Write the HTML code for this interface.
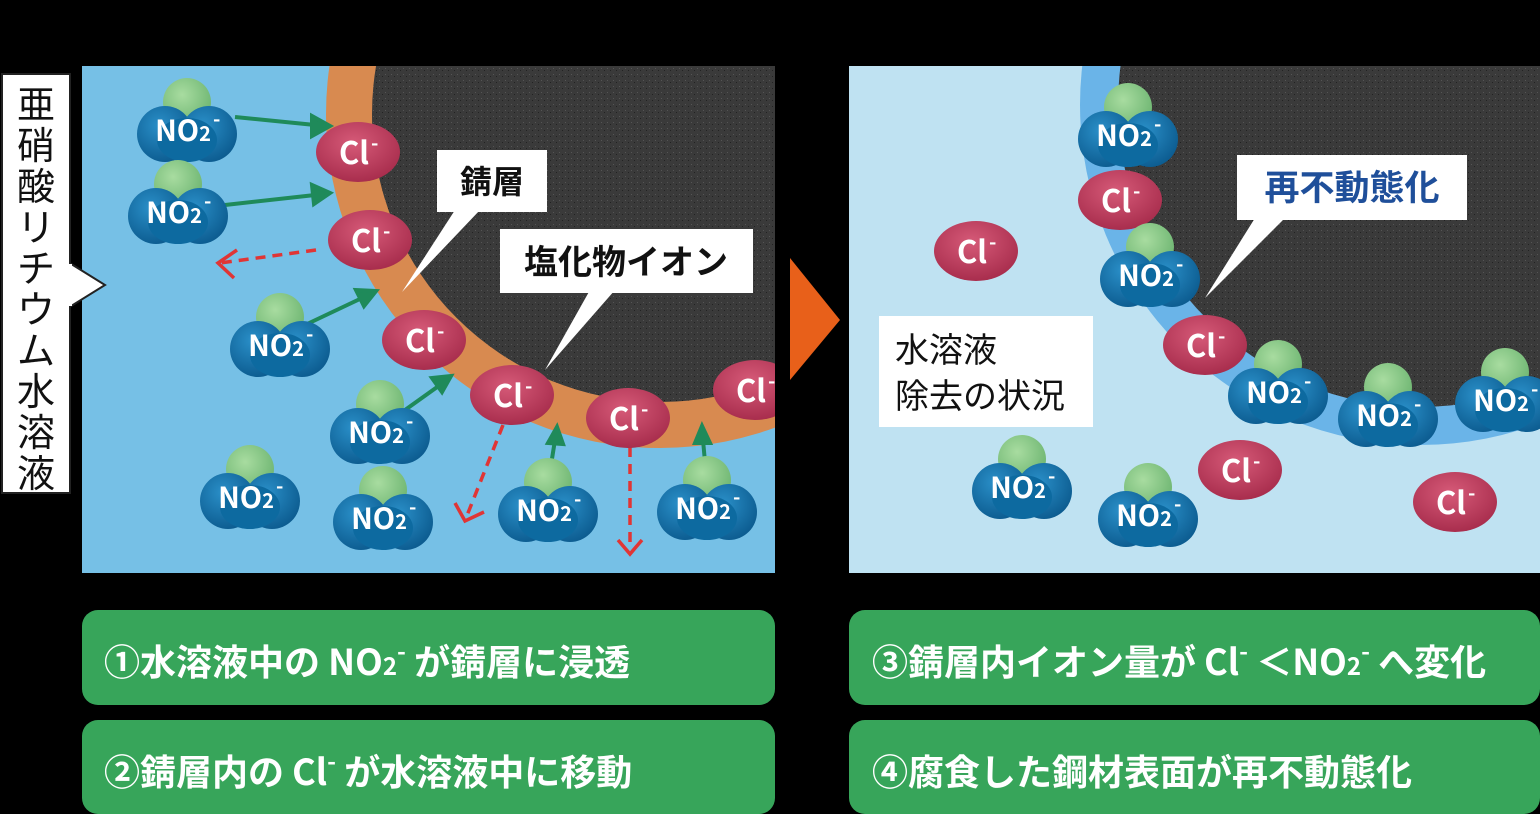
<!DOCTYPE html><html><head><meta charset="utf-8"><style>
html,body{margin:0;padding:0;background:#000;width:1540px;height:814px;overflow:hidden}
svg{display:block}
text{font-family:"Noto Sans CJK JP","Liberation Sans",sans-serif}
</style></head><body>
<svg width="1540" height="814" viewBox="0 0 1540 814" xmlns="http://www.w3.org/2000/svg">
<defs>
<pattern id="nz" width="6" height="6" patternUnits="userSpaceOnUse"><rect width="6" height="6" fill="#3a3a3a"/><rect x="1" y="2" width="1" height="1" fill="#555"/><rect x="4" y="4" width="1" height="1" fill="#222"/></pattern>
<radialGradient id="gb" cx="0.4" cy="0.35" r="0.7"><stop offset="0" stop-color="#2a8fc8"/><stop offset="1" stop-color="#0b5a8e"/></radialGradient>
<radialGradient id="gg" cx="0.4" cy="0.35" r="0.7"><stop offset="0" stop-color="#a8dca0"/><stop offset="1" stop-color="#6cb470"/></radialGradient>
<radialGradient id="gr" cx="0.45" cy="0.35" r="0.7"><stop offset="0" stop-color="#d65a78"/><stop offset="1" stop-color="#a52a4a"/></radialGradient>
<g id="no2"><circle cx="0" cy="-28" r="24" fill="url(#gg)"/><circle cx="-22" cy="4" r="28" fill="url(#gb)"/><circle cx="22" cy="4" r="28" fill="url(#gb)"/><ellipse cx="0" cy="10" rx="30" ry="22" fill="#0d6aa0"/><text x="-4" y="11" text-anchor="middle" font-size="29" font-weight="bold" fill="#fff">NO<tspan font-size="20">2</tspan></text><text x="26" y="-4" font-size="20" font-weight="bold" fill="#fff">-</text></g>
<g id="cl"><ellipse cx="0" cy="0" rx="42" ry="30" fill="url(#gr)"/><text x="-4" y="12" text-anchor="middle" font-size="31" font-weight="bold" fill="#fff">Cl</text><text x="13" y="-2" font-size="20" font-weight="bold" fill="#fff">-</text></g>
<clipPath id="cL"><rect x="82" y="66" width="693" height="507"/></clipPath>
<clipPath id="cR"><rect x="849" y="66" width="691" height="507"/></clipPath>
</defs>

<polygon points="790,258 840,320 790,380" fill="#e8601a"/>

<g clip-path="url(#cL)">
<rect x="82" y="66" width="693" height="507" fill="#76c0e6"/>
<circle cx="660" cy="114" r="334" fill="#d88a50"/>
<circle cx="660" cy="114" r="288" fill="url(#nz)"/>
<g stroke="#1f8a5a" stroke-width="4" fill="#1f8a5a">
<line x1="235" y1="117" x2="315" y2="125"/><polygon points="330,126 312,116 312,136"/>
<line x1="225" y1="205" x2="315" y2="195"/><polygon points="330,193 312,185 314,204"/>
<line x1="305" y1="325" x2="362" y2="298"/><polygon points="376,291 356,290 364,306"/>
<line x1="405" y1="410" x2="440" y2="385"/><polygon points="451,376 432,378 442,392"/>
<line x1="551" y1="465" x2="555" y2="440"/><polygon points="557,427 548,443 563,444"/>
<line x1="705" y1="462" x2="703" y2="440"/><polygon points="702,426 695,443 710,443"/>
</g>
<g stroke="#e03535" stroke-width="3.5" fill="none" stroke-dasharray="10,7">
<line x1="316" y1="250" x2="220" y2="263"/>
<line x1="503" y1="425" x2="466" y2="518"/>
<line x1="630" y1="447" x2="630" y2="548"/>
</g>
<g stroke="#e03535" stroke-width="3.5" fill="none">
<polyline points="237,250 218,263 234,278"/>
<polyline points="455,503 465,521 484,512"/>
<polyline points="618,540 630,554 642,540"/>
</g>
<use href="#cl" x="358" y="152"/><use href="#cl" x="370" y="240"/><use href="#cl" x="424" y="340"/><use href="#cl" x="512" y="395"/><use href="#cl" x="628" y="418"/><use href="#cl" x="755" y="390"/>
<use href="#no2" x="187" y="130"/><use href="#no2" x="178" y="212"/><use href="#no2" x="280" y="345"/><use href="#no2" x="380" y="432"/><use href="#no2" x="250" y="497"/><use href="#no2" x="383" y="518"/><use href="#no2" x="548" y="510"/><use href="#no2" x="707" y="508"/>
<polygon points="455,210 480,210 402,292" fill="#fff"/>
<rect x="437" y="150" width="110" height="62" fill="#fff"/>
<text x="492" y="193" text-anchor="middle" font-size="32" font-weight="bold" fill="#111">錆層</text>
<polygon points="590,290 615,290 545,370" fill="#fff"/>
<rect x="500" y="229" width="253" height="64" fill="#fff"/>
<text x="626" y="274" text-anchor="middle" font-size="34" font-weight="bold" fill="#111">塩化物イオン</text>
</g>

<polygon points="68,262 105,285 68,308" fill="#fff" stroke="#222" stroke-width="2"/>
<rect x="2" y="74" width="68" height="419" fill="#fff" stroke="#222" stroke-width="2"/>
<rect x="66" y="264" width="6" height="42" fill="#fff"/>
<text font-size="38" fill="#111" text-anchor="middle">
<tspan x="36" y="118">亜</tspan><tspan x="36" y="159">硝</tspan><tspan x="36" y="200">酸</tspan><tspan x="36" y="241">リ</tspan><tspan x="36" y="282">チ</tspan><tspan x="36" y="323">ウ</tspan><tspan x="36" y="364">ム</tspan><tspan x="36" y="405">水</tspan><tspan x="36" y="446">溶</tspan><tspan x="36" y="487">液</tspan></text>

<g clip-path="url(#cR)">
<rect x="849" y="66" width="691" height="507" fill="#bfe2f2"/>
<circle cx="1420" cy="105" r="340" fill="#6ab4e8"/>
<circle cx="1420" cy="105" r="302" fill="url(#nz)"/>
<use href="#cl" x="1120" y="200"/><use href="#cl" x="976" y="251"/><use href="#cl" x="1205" y="345"/><use href="#cl" x="1240" y="470"/><use href="#cl" x="1455" y="502"/>
<use href="#no2" x="1128" y="135"/><use href="#no2" x="1150" y="275"/><use href="#no2" x="1278" y="392"/><use href="#no2" x="1388" y="415"/><use href="#no2" x="1505" y="400"/><use href="#no2" x="1022" y="487"/><use href="#no2" x="1148" y="515"/>
<polygon points="1255,218 1285,218 1205,298" fill="#fff"/>
<rect x="1237" y="155" width="230" height="65" fill="#fff"/>
<text x="1352" y="200" text-anchor="middle" font-size="35" font-weight="bold" fill="#1f4f9a">再不動態化</text>
<rect x="879" y="316" width="214" height="111" fill="#fff"/>
<text font-size="34" fill="#111"><tspan x="895" y="362">水溶液</tspan><tspan x="895" y="408">除去の状況</tspan></text>
</g>

<g fill="#37a55a">
<rect x="82" y="610" width="693" height="95" rx="16"/>
<rect x="82" y="720" width="693" height="94" rx="16"/>
<rect x="849" y="610" width="691" height="95" rx="16"/>
<rect x="849" y="720" width="691" height="94" rx="16"/>
</g>
<g font-size="36" font-weight="bold" fill="#fff">
<text x="104" y="675">①水溶液中の NO<tspan font-size="24">2</tspan><tspan dy="-15" font-size="24">-</tspan><tspan dy="15"> が錆層に浸透</tspan></text>
<text x="104" y="785">②錆層内の Cl<tspan dy="-15" font-size="24">-</tspan><tspan dy="15"> が水溶液中に移動</tspan></text>
<text x="872" y="675">③錆層内イオン量が Cl<tspan dy="-15" font-size="24">-</tspan><tspan dy="15"> ＜NO</tspan><tspan font-size="24">2</tspan><tspan dy="-15" font-size="24">-</tspan><tspan dy="15"> へ変化</tspan></text>
<text x="872" y="785">④腐食した鋼材表面が再不動態化</text>
</g>
</svg>
</body></html>
